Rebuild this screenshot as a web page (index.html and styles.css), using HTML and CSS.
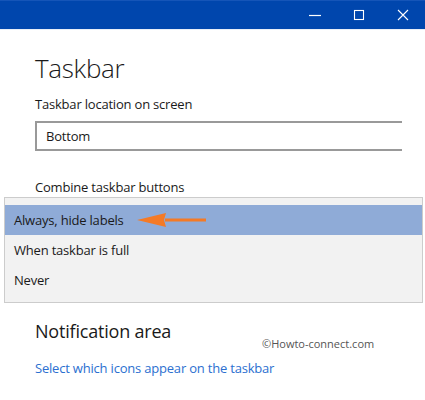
FILE: index.html
```html
<!DOCTYPE html>
<html>
<head>
<meta charset="utf-8">
<link rel="stylesheet" href="styles.css">
</head>
<body>
<div class="window">
  <div class="titlebar">
    <div class="ctrl">
      <svg width="14" height="14" viewBox="0 0 14 14"><path d="M1 7.5H13" stroke="#fff" stroke-width="1.2"/></svg>
    </div>
    <div class="ctrl">
      <svg width="14" height="14" viewBox="0 0 14 14"><rect x="2.5" y="2.5" width="9" height="9" fill="none" stroke="#fff" stroke-width="1.1"/></svg>
    </div>
    <div class="ctrl">
      <svg width="14" height="14" viewBox="0 0 14 14"><path d="M2 2L12 12M12 2L2 12" stroke="#fff" stroke-width="1.1"/></svg>
    </div>
  </div>
  <div class="content">
    <h1 class="heading">Taskbar</h1>
    <div class="label">Taskbar location on screen</div>
    <div class="select">Bottom</div>
    <div class="label combine">Combine taskbar buttons</div>
  </div>
  <div class="list">
    <div class="item selected">Always, hide labels
      <svg class="arrow" width="70" height="16" viewBox="0 0 70 16"><path d="M28 6.5H69V9.5H28Z" fill="#f47a26"/><path d="M0 8L29 1L27 8L29 15Z" fill="#f47a26"/></svg>
    </div>
    <div class="item">When taskbar is full</div>
    <div class="item">Never</div>
  </div>
  <div class="content bottom">
    <h2 class="subheading">Notification area</h2>
    <div class="watermark">©Howto-connect.com</div>
    <a class="link">Select which icons appear on the taskbar</a>
  </div>
</div>
</body>
</html>
```
FILE: styles.css
```css
html, body {
  margin: 0;
  padding: 0;
  background: #fff;
}
body {
  width: 425px;
  height: 400px;
  overflow: hidden;
  font-family: "Open Sans", "Noto Sans", sans-serif;
  color: #1a1a1a;
}
.titlebar {
  height: 30px;
  background: #0046ad;
  border-top: 1px solid #1555b8;
  box-sizing: border-box;
  display: flex;
  justify-content: flex-end;
  align-items: center;
  padding-right: 0;
  border-bottom: 1px solid #e8eef8;
}
.ctrl {
  width: 44px;
  height: 14px;
  display: flex;
  justify-content: center;
  align-items: center;
}
.ctrl svg { display: block; }
.content {
  padding-left: 35px;
}
.heading {
  margin: 0;
  padding-top: 21px;
  font-weight: 300;
  font-size: 26px;
  line-height: 34px;
  color: #1a1a1a;
  letter-spacing: -0.3px;
}
.label {
  font-size: 13px;
  line-height: 18px;
  margin-top: 10px;
  letter-spacing: -0.2px;
}
.select {
  margin-top: 8px;
  height: 26px;
  width: 356px;
  border: 2px solid #999;
  border-right: none;
  font-size: 13px;
  line-height: 26px;
  padding-left: 9px;
  box-sizing: content-box;
  letter-spacing: -0.2px;
}
.combine {
  margin-top: 27px;
}
.list {
  margin: 1px 2px 0 4px;
  background: #f2f2f2;
  border: 1px solid #cccccc;
  padding: 7px 0 7px;
}
.item {
  height: 30px;
  line-height: 30px;
  font-size: 13px;
  padding-left: 9px;
  letter-spacing: -0.2px;
  display: flex;
  align-items: center;
}
.item.selected {
  background: #8fabd7;
}
.arrow {
  margin-left: 13px;
  display: block;
}
.bottom {
  padding-top: 16px;
  position: relative;
}
.subheading {
  margin: 0;
  font-weight: 400;
  font-size: 18px;
  line-height: 24px;
  letter-spacing: -0.2px;
}
.watermark {
  font-size: 11px;
  color: #555;
  margin-left: 227px;
  line-height: 14px;
  margin-top: -6px;
}
.link {
  display: block;
  margin-top: 8px;
  font-size: 13px;
  color: #2b6fd0;
  letter-spacing: -0.2px;
  line-height: 18px;
}
```
